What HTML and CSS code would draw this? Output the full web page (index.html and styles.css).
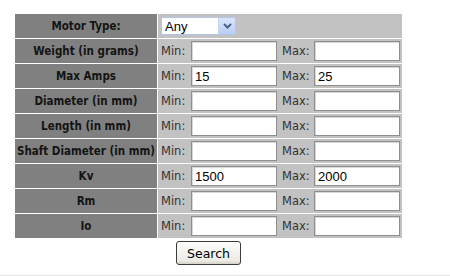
FILE: index.html
```html
<!DOCTYPE html>
<html lang="en">
<head>
  <meta charset="UTF-8">
  <title>Motor Search</title>
  <link rel="stylesheet" href="styles.css">
</head>
<body>
  <form class="search-form">
    <table class="search-table">
      <tr>
        <th>Motor Type:</th>
        <td>
          <div class="fake-select">
            <span class="fake-select-value">Any</span>
            <span class="fake-select-btn">
              <svg width="9" height="6" viewBox="0 0 9 6"><path d="M1 1 L4.5 4.5 L8 1" fill="none" stroke="#4d6185" stroke-width="2"/></svg>
            </span>
          </div>
        </td>
      </tr>
      <tr>
        <th>Weight (in grams)</th>
        <td><div class="range"><span class="lbl">Min:</span><input type="text"><span class="lbl lbl-max">Max:</span><input type="text"></div></td>
      </tr>
      <tr>
        <th>Max Amps</th>
        <td><div class="range"><span class="lbl">Min:</span><input type="text" value="15"><span class="lbl lbl-max">Max:</span><input type="text" value="25"></div></td>
      </tr>
      <tr>
        <th>Diameter (in mm)</th>
        <td><div class="range"><span class="lbl">Min:</span><input type="text"><span class="lbl lbl-max">Max:</span><input type="text"></div></td>
      </tr>
      <tr>
        <th>Length (in mm)</th>
        <td><div class="range"><span class="lbl">Min:</span><input type="text"><span class="lbl lbl-max">Max:</span><input type="text"></div></td>
      </tr>
      <tr>
        <th>Shaft Diameter (in mm)</th>
        <td><div class="range"><span class="lbl">Min:</span><input type="text"><span class="lbl lbl-max">Max:</span><input type="text"></div></td>
      </tr>
      <tr>
        <th>Kv</th>
        <td><div class="range"><span class="lbl">Min:</span><input type="text" value="1500"><span class="lbl lbl-max">Max:</span><input type="text" value="2000"></div></td>
      </tr>
      <tr>
        <th>Rm</th>
        <td><div class="range"><span class="lbl">Min:</span><input type="text"><span class="lbl lbl-max">Max:</span><input type="text"></div></td>
      </tr>
      <tr>
        <th>Io</th>
        <td><div class="range"><span class="lbl">Min:</span><input type="text"><span class="lbl lbl-max">Max:</span><input type="text"></div></td>
      </tr>
    </table>
    <div class="actions">
      <button type="button" class="btn">Search</button>
    </div>
  </form>
  <div class="page-rule"></div>
</body>
</html>
```

FILE: styles.css
```css
body {
  margin: 0;
  padding: 0;
  background: #fff;
  font-family: "DejaVu Sans", Verdana, sans-serif;
}
.search-form {
  padding: 13px 0 0 14px;
  width: 389px;
}
.search-table {
  border-collapse: separate;
  border-spacing: 1px;
  width: 389px;
}
.search-table th {
  width: 142px;
  height: 24px;
  padding: 0;
  background: #808080;
  color: #141414;
  font-family: "DejaVu Sans Condensed", "DejaVu Sans", sans-serif;
  font-weight: bold;
  font-size: 11.5px;
  text-align: center;
  white-space: nowrap;
}
.search-table td {
  padding: 0 2px;
  height: 24px;
  background: #c2c2c2;
}
.range {
  display: flex;
  align-items: center;
}
.lbl {
  width: 31px;
  font-size: 11.5px;
  color: #333;
  padding-left: 1px;
  box-sizing: border-box;
}
.lbl-max {
  width: 37px;
  padding-left: 5px;
}
.range input {
  width: 86px;
  height: 20px;
  box-sizing: border-box;
  margin: 0;
  padding: 1px 3px 0;
  border: 1px solid #8e8e8e;
  box-shadow: inset 1px 1px 0 #d8d8d8;
  background: #fff;
  font-family: "Liberation Sans", Arial, sans-serif;
  font-size: 13px;
  color: #000;
  outline: none;
}
.fake-select {
  display: flex;
  align-items: center;
  width: 75px;
  height: 18px;
  margin-left: 1px;
  border: 1px solid #b4c6e6;
  background: #fff;
  box-sizing: border-box;
}
.fake-select-value {
  flex: 1;
  padding-left: 3px;
  font-family: "Liberation Sans", Arial, sans-serif;
  font-size: 13px;
  color: #000;
}
.fake-select-btn {
  width: 16px;
  height: 16px;
  display: flex;
  align-items: center;
  justify-content: center;
  background: linear-gradient(#d9e5fc, #b9cdf5);
  border-left: 1px solid #c6d6f5;
}
.actions {
  text-align: center;
  padding-top: 2px;
}
.btn {
  width: 65px;
  height: 24px;
  padding: 0;
  border: 1px solid #3c3c3c;
  border-radius: 3px;
  background: linear-gradient(#fdfdfb, #ecebe6 85%, #d6d0c5);
  font-family: "DejaVu Sans", Verdana, sans-serif;
  font-size: 12.5px;
  color: #000;
  cursor: pointer;
}
.page-rule {
  margin-top: 10px;
  border-top: 1px solid #e6e6e6;
}
```
